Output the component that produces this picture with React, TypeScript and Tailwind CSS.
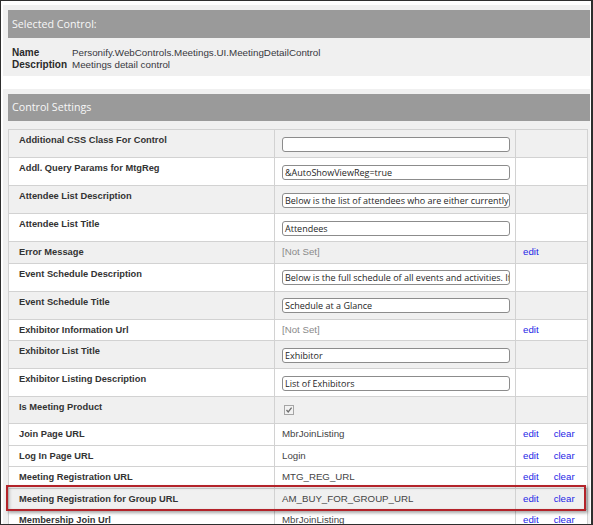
import React from "react";

type Row = {
  label: string;
  kind: "input" | "notset" | "check" | "text";
  value?: string;
  gray?: boolean;
  h: string;
};

const rows: Row[] = [
  { label: "Additional CSS Class For Control", kind: "input", value: "", gray: true, h: "h-[27px]" },
  { label: "Addl. Query Params for MtgReg", kind: "input", value: "&AutoShowViewReg=true", h: "h-[27px]" },
  { label: "Attendee List Description", kind: "input", value: "Below is the list of attendees who are either currently registered for this meeting", gray: true, h: "h-[27px]" },
  { label: "Attendee List Title", kind: "input", value: "Attendees", h: "h-[27px]" },
  { label: "Error Message", kind: "notset", gray: true, h: "h-[20.5px]" },
  { label: "Event Schedule Description", kind: "input", value: "Below is the full schedule of all events and activities. If you have", h: "h-[27px]" },
  { label: "Event Schedule Title", kind: "input", value: "Schedule at a Glance", gray: true, h: "h-[27px]" },
  { label: "Exhibitor Information Url", kind: "notset", h: "h-[20.5px]" },
  { label: "Exhibitor List Title", kind: "input", value: "Exhibitor", gray: true, h: "h-[27px]" },
  { label: "Exhibitor Listing Description", kind: "input", value: "List of Exhibitors", h: "h-[27px]" },
  { label: "Is Meeting Product", kind: "check", gray: true, h: "h-[26px]" },
  { label: "Join Page URL", kind: "text", value: "MbrJoinListing", h: "h-[20.5px]" },
  { label: "Log In Page URL", kind: "text", value: "Login", h: "h-[20.5px]" },
  { label: "Meeting Registration URL", kind: "text", value: "MTG_REG_URL", h: "h-[20.5px]" },
  { label: "Meeting Registration for Group URL", kind: "text", value: "AM_BUY_FOR_GROUP_URL", gray: true, h: "h-[20.5px]" },
  { label: "Membership Join Url", kind: "text", value: "MbrJoinListing", h: "h-[20.5px]" },
];

const arial = "font-['Liberation_Sans',Arial,sans-serif]";
const segoe = "font-['Open_Sans',sans-serif]";

function Check() {
  return (
    <svg width="10" height="10" viewBox="0 0 10 10">
      <rect x="0.5" y="0.5" width="9" height="9" fill="#f2f2f2" stroke="#a5a5a5" />
      <path d="M2.5 5 L4.2 7 L7.6 2.6" fill="none" stroke="#6e6e6e" strokeWidth="1.3" />
    </svg>
  );
}

function Links({ clear }: { clear: boolean }) {
  return (
    <div className={`flex pl-[7px] pt-[4px] leading-[12px] text-[9.7px] text-[#2626e6] ${arial}`}>
      <span>edit</span>
      {clear && <span className="ml-[15px]">clear</span>}
    </div>
  );
}

export default function App() {
  return (
    <div className="w-[593px] h-[525px] overflow-hidden bg-white border-l border-t border-b border-r-2 border-[#2e2e2e] pl-[2px] pt-[4px] pr-[1px]">
      <div className="h-[71px] bg-[#f0f0f0] pl-[5px] pt-[5px]">
        <div className={`h-[27.5px] bg-[#9a9a9a] flex items-center pl-[4px] text-[10.7px] text-[#f7f7f7] ${segoe}`}>
          Selected Control:
        </div>
        <div className={`grid grid-cols-[60px_1fr] pl-[4px] pt-[9px] leading-[12.5px] text-[#2a2a2a] ${arial}`}>
          <span className="font-bold text-[10px]">Name</span>
          <span className="text-[9.8px] text-[#383840]">Personify.WebControls.Meetings.UI.MeetingDetailControl</span>
          <span className="font-bold text-[10px]">Description</span>
          <span className="text-[9.8px] text-[#383840]">Meetings detail control</span>
        </div>
      </div>

      <div className="mt-[13px] h-[500px] bg-[#f0f0f0] pl-[5px] pt-[5px]">
        <div className={`h-[27px] bg-[#9a9a9a] flex items-center pl-[4px] text-[10.7px] text-[#f7f7f7] ${segoe}`}>
          Control Settings
        </div>
        <div className="relative mt-[8px] mr-[2px] border border-[#d2d2d2] bg-white">
          {rows.map((r) => (
            <div
              key={r.label}
              className={`grid grid-cols-[265px_241px_1fr] border-b border-[#d2d2d2] ${r.gray ? "bg-[#f0f0f0]" : "bg-white"}`}
            >
              <div className={`${r.h} pl-[10px] pt-[4px] leading-[12px] text-[9.3px] font-bold text-[#333] ${arial}`}>
                {r.label}
              </div>
              <div className="border-l border-[#d2d2d2] pl-[7px]">
                {r.kind === "input" && (
                  <div className="pt-[6.5px]">
                    <div className={`w-[228px] h-[15px] border border-[#8c8c8c] rounded-[3px] bg-white px-[2px] overflow-hidden whitespace-nowrap leading-[13px] text-[9px] text-[#262626] ${segoe}`}>
                      {r.value}
                    </div>
                  </div>
                )}
                {r.kind === "notset" && (
                  <div className={`pt-[4px] leading-[12px] text-[9.7px] text-[#8a8a8a] ${arial}`}>[Not Set]</div>
                )}
                {r.kind === "text" && (
                  <div className={`pt-[4px] leading-[12px] text-[9.7px] text-[#444] ${arial}`}>{r.value}</div>
                )}
                {r.kind === "check" && (
                  <div className="pt-[8px] pl-[2px]">
                    <Check />
                  </div>
                )}
              </div>
              <div className="border-l border-[#d2d2d2]">
                {r.kind === "notset" && <Links clear={false} />}
                {r.kind === "text" && <Links clear={true} />}
              </div>
            </div>
          ))}
          <div className="absolute left-[-3px] top-[355px] w-[580px] h-[26px] border-2 border-[#b3232a] shadow-[2px_2px_3px_rgba(0,0,0,0.35),inset_2px_1px_3px_rgba(0,0,0,0.18)]" />
        </div>
      </div>
    </div>
  );
}
